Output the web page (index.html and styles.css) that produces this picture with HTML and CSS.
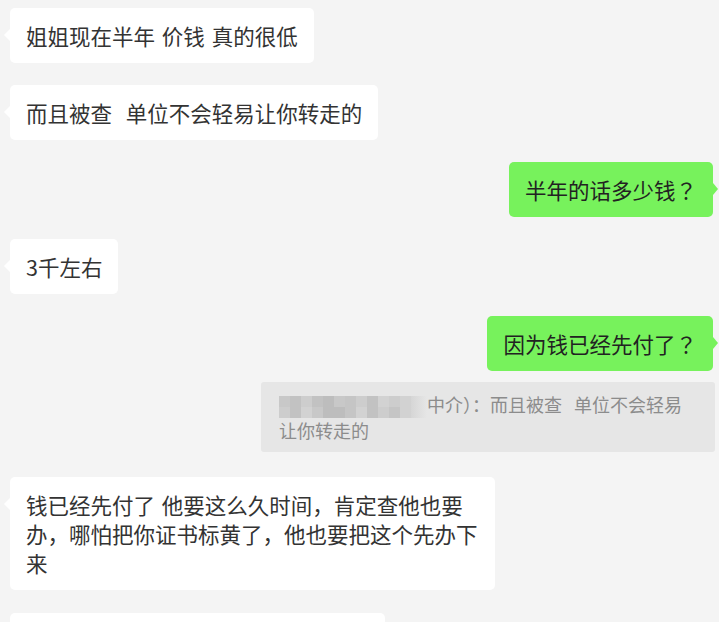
FILE: index.html
```html
<!DOCTYPE html>
<html>
<head>
  <meta charset="UTF-8">
  <meta name="viewport" content="width=device-width, initial-scale=1.0">
  <title>聊天记录</title>
  <link rel="stylesheet" href="styles.css">
</head>
<body>
  <div class="chat">
    <div class="row left">
      <div class="bubble">姐姐现在半年 价钱 真的很低</div>
    </div>
    <div class="row left">
      <div class="bubble">而且被查&nbsp; 单位不会轻易让你转走的</div>
    </div>
    <div class="row right">
      <div class="bubble mine">半年的话多少钱<span class="punct">？</span></div>
    </div>
    <div class="row left">
      <div class="bubble">3千左右</div>
    </div>
    <div class="row right">
      <div class="bubble mine">因为钱已经先付了<span class="punct">？</span></div>
    </div>
    <div class="row right quote-row">
      <div class="quote">
        <span class="mosaic">
          <i class="m1"></i><i class="m2"></i><i class="m3"></i><i class="m2"></i><i class="m4"></i><i class="m1"></i><i class="m5"></i><i class="m3"></i><i class="m2"></i><i class="m6"></i><i class="m3"></i><i class="m6"></i>
          <i class="m3"></i><i class="m2"></i><i class="m6"></i><i class="m1"></i><i class="m4"></i><i class="m4"></i><i class="m5"></i><i class="m6"></i><i class="m2"></i><i class="m3"></i><i class="m5"></i><i class="m6"></i>
        </span><span class="fade"></span>中介）：而且被查&nbsp; 单位不会轻易让你转走的
      </div>
    </div>
    <div class="row left multi-row">
      <div class="bubble wide">钱已经先付了 他要这么久时间，肯定查他也要办，哪怕把你证书标黄了，他也要把这个先办下来</div>
    </div>
    <div class="row left last-row">
      <div class="bubble blank"></div>
    </div>
  </div>
</body>
</html>
```

FILE: styles.css
```css
html, body {
  margin: 0;
  padding: 0;
}

body {
  background-color: #f4f4f4;
  font-family: "Noto Sans CJK SC", "Noto Sans", sans-serif;
  color: #333333;
  overflow: hidden;
}

.chat {
  display: flex;
  flex-direction: column;
  gap: 22px;
  padding: 8px 6px 0 10px;
}

.row {
  display: flex;
}

.left {
  justify-content: flex-start;
}

.right {
  justify-content: flex-end;
}

.bubble {
  position: relative;
  background-color: #ffffff;
  border-radius: 5px;
  padding: 13px 16px;
  font-size: 21.5px;
  line-height: 29px;
  word-spacing: 2px;
  box-sizing: border-box;
}

/* little tail on the side */
.bubble::before {
  content: "";
  position: absolute;
  top: 21px;
  left: -6px;
  border-top: 6px solid transparent;
  border-bottom: 6px solid transparent;
  border-right: 6px solid #ffffff;
}

.bubble.mine {
  background-color: #77f25c;
  color: #222222;
}

.bubble.mine::before {
  left: auto;
  right: -5px;
  border-right: none;
  border-left: 5px solid #77f25c;
}

.punct {
  font-family: "Noto Sans CJK TC", sans-serif;
}

.bubble.wide {
  width: 485px;
  padding-right: 15px;
}

.bubble.blank {
  width: 375px;
  height: 55px;
}

.quote-row {
  margin-top: -11px;
  margin-right: -2px;
}

.quote {
  width: 454px;
  box-sizing: border-box;
  background-color: #e6e6e6;
  border-radius: 3px;
  padding: 10px 18px 9px 18px;
  font-size: 18px;
  line-height: 25px;
  color: #8c8c8c;
  word-spacing: 2px;
}

.mosaic {
  display: inline-grid;
  grid-template-columns: repeat(12, 11px);
  grid-auto-rows: 11px;
  height: 22px;
  vertical-align: middle;
}

.mosaic i {
  display: block;
}

.m1 { background-color: #c8c8c8; }
.m2 { background-color: #c2c2c2; }
.m3 { background-color: #cdcdcd; }
.m4 { background-color: #bdbdbd; }
.m5 { background-color: #c5c5c5; }
.m6 { background-color: #d2d2d2; }

.fade {
  display: inline-block;
  width: 16px;
  height: 22px;
  vertical-align: middle;
  background: linear-gradient(to right, #d6d6d6, #e6e6e6);
}

.multi-row {
  margin-top: 3px;
}

.last-row {
  margin-top: 1px;
}
```
